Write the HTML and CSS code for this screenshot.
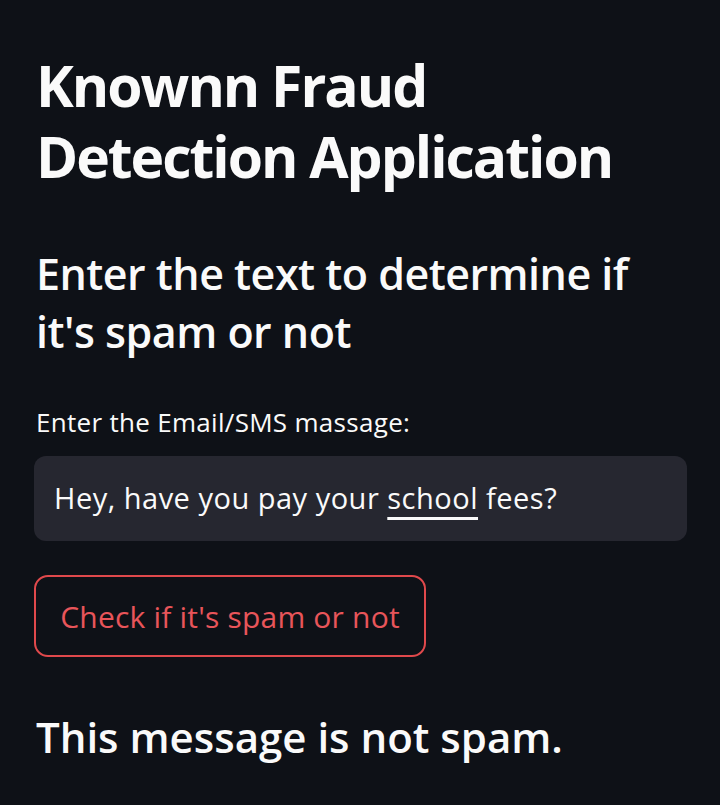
FILE: index.html
```html
<!DOCTYPE html>
<html lang="en">
<head>
<meta charset="utf-8">
<title>Knownn Fraud Detection Application</title>
<link rel="stylesheet" href="styles.css">
</head>
<body>
<main class="main">
  <h1 class="title">Knownn Fraud<br>Detection Application</h1>
  <h3 class="subtitle">Enter the text to determine if<br>it's spam or not</h3>
  <label class="label" for="msg">Enter the Email/SMS massage:</label>
  <div class="input" id="msg">Hey, have you pay your <span class="spell">school</span> fees?</div>
  <button class="btn" type="button">Check if it's spam or not</button>
  <h3 class="result">This message is not spam.</h3>
</main>
</body>
</html>
```
FILE: styles.css
```css
html, body {
  margin: 0;
  padding: 0;
  background: #0e1117;
}
body {
  color: #fafafa;
  font-family: "Open Sans", "Noto Sans", sans-serif;
  width: 720px;
  height: 805px;
  overflow: hidden;
}
.main {
  padding: 50px 33px 0 36px;
  display: flex;
  flex-direction: column;
  align-items: flex-start;
}
.title {
  margin: 0;
  font-size: 57px;
  line-height: 71px;
  font-weight: 700;
  letter-spacing: -2px;
}
.subtitle {
  margin: 53px 0 0;
  font-size: 43px;
  line-height: 58px;
  font-weight: 600;
  letter-spacing: -0.5px;
}
.label {
  margin-top: 44px;
  font-size: 26px;
  line-height: 34px;
  letter-spacing: 0.3px;
}
.input {
  margin-top: 17px;
  margin-left: -2px;
  box-sizing: border-box;
  width: 653px;
  height: 85px;
  padding: 0 20px;
  background: #262730;
  border-radius: 12px;
  font-size: 29px;
  line-height: 84px;
  letter-spacing: 0.5px;
  white-space: nowrap;
}
.spell {
  text-decoration: underline;
  text-decoration-thickness: 3px;
  text-underline-offset: 8px;
}
.btn {
  margin-top: 34px;
  margin-left: -2px;
  box-sizing: border-box;
  width: 392px;
  height: 82px;
  padding: 0;
  background: transparent;
  border: 2px solid #e0494c;
  border-radius: 14px;
  color: #e8555a;
  font-family: inherit;
  font-size: 30px;
  letter-spacing: 0.2px;
}
.result {
  margin: 52px 0 0;
  font-size: 42px;
  line-height: 56px;
  font-weight: 600;
}
```
